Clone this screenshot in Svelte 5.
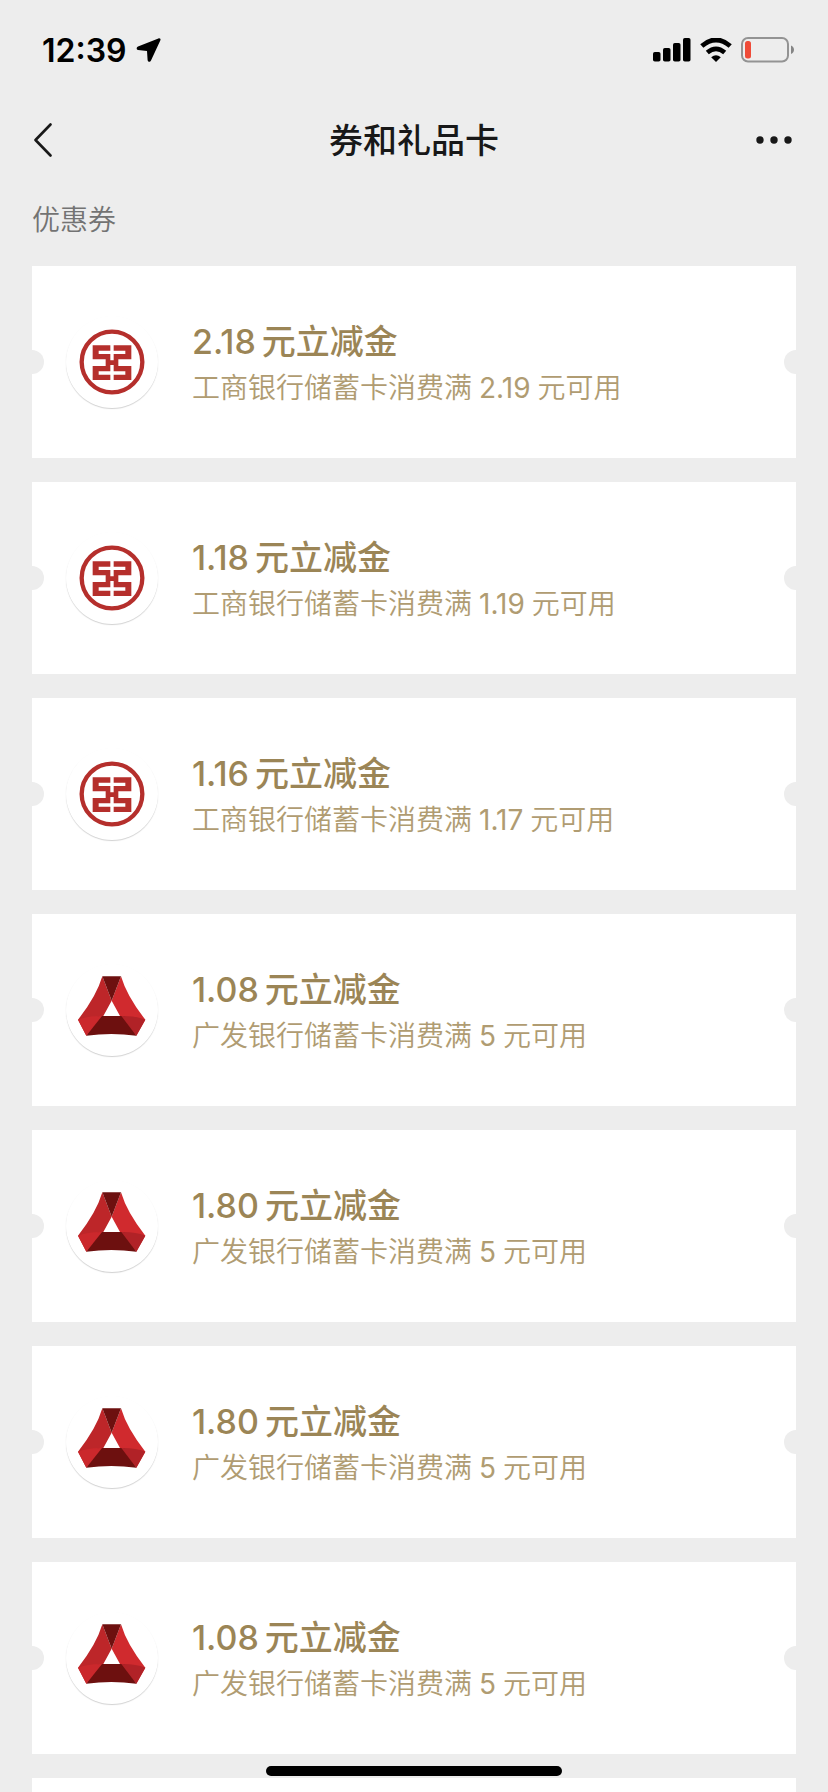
<script>
  const coupons = [
    { bank: 'icbc', name: '工商银行', amount: '2.18', min: '2.19' },
    { bank: 'icbc', name: '工商银行', amount: '1.18', min: '1.19' },
    { bank: 'icbc', name: '工商银行', amount: '1.16', min: '1.17' },
    { bank: 'cgb', name: '广发银行', amount: '1.08', min: '5' },
    { bank: 'cgb', name: '广发银行', amount: '1.80', min: '5' },
    { bank: 'cgb', name: '广发银行', amount: '1.80', min: '5' },
    { bank: 'cgb', name: '广发银行', amount: '1.08', min: '5' }
  ];
</script>

<div class="screen">
  <div class="status">
    <div class="clock">
      <span>12:39</span>
      <svg width="26" height="26" viewBox="0 0 26 26" aria-hidden="true">
        <path d="M22.400 1.400 2 9.600C.2 10.400.2 12.900 2 13.100L11 13.900 11.600 23C11.800 25.200 14.200 25.300 15 23.500L24.400 3.300C25 1.900 23.800.8 22.400 1.400Z" />
      </svg>
    </div>
    <div class="indicators">
      <svg width="38" height="24" viewBox="0 0 38 24" aria-hidden="true">
        <rect x="0" y="14" width="7.500" height="9.500" rx="1.800" />
        <rect x="10" y="10" width="7.500" height="13.500" rx="1.800" />
        <rect x="20" y="5" width="7.500" height="18.500" rx="1.800" />
        <rect x="30" y="0" width="7.500" height="23.500" rx="1.800" />
      </svg>
      <svg width="32" height="24" viewBox="0 0 32 24" aria-hidden="true">
        <path d="M1.800 8Q16-4.200 30.200 8" fill="none" stroke="#000" stroke-width="4.800" />
        <path d="M7.300 14.600Q16 7 24.700 14.600" fill="none" stroke="#000" stroke-width="4.600" />
        <path d="M11.200 19.300Q16 15.400 20.800 19.300L16 24Z" />
      </svg>
      <svg width="54" height="26" viewBox="0 0 54 26" aria-hidden="true">
        <rect x="1" y="1" width="46" height="23.500" rx="6" fill="none" stroke="#939393" stroke-width="2" />
        <rect x="4" y="4" width="6" height="17.500" rx="2.500" fill="#ef4b38" />
        <path d="M50 8.500c4 1.200 4 7.300 0 8.500Z" fill="#858585" />
      </svg>
    </div>
  </div>

  <header>
    <button aria-label="返回">
      <svg width="20" height="36" viewBox="0 0 20 36" aria-hidden="true">
        <path d="M18.500 2.500 3.500 18l15 15.500" fill="none" stroke="#181818" stroke-width="2.600" stroke-linecap="round" stroke-linejoin="round" />
      </svg>
    </button>
    <h1>券和礼品卡</h1>
    <button class="more" aria-label="更多">
      <svg width="36" height="8" viewBox="0 0 36 8" fill="#181818" aria-hidden="true">
        <circle cx="4" cy="4" r="3.700" /><circle cx="18" cy="4" r="3.700" /><circle cx="32" cy="4" r="3.700" />
      </svg>
    </button>
  </header>

  <main>
    <h2>优惠券</h2>
    <ul>
      {#each coupons as c}
        <li>
          <div class="logo">
            {#if c.bank === 'icbc'}
              <svg viewBox="0 0 276 276" aria-hidden="true">
                <circle cx="138" cy="138" r="91" fill="none" stroke="#b52f2c" stroke-width="13" />
                <path fill="#b52f2c" d="M80 88h53v16H98v10h35v19h10v-19h35v-10h-35V88h53v42h-39v20h39v42h-53v-16h35v-10h-35v-19h-10v19H98v10h35v16H80v-42h39v-20H80Z" />
              </svg>
            {:else}
              <svg viewBox="0 0 276 276" aria-hidden="true">
                <path fill="#bd2629" d="M109 37Q91 98 36 167L61 215 112 156 137 110Z" />
                <path fill="#d02a2e" d="M165 37Q183 98 238 167L211 215 162 156 137 110Z" />
                <path fill="#6d100f" d="M109 37h56l-28 73Z" />
                <path fill="#6d100f" d="M96 156h80l35 59q-75-10-150 0Z" />
                <path fill="#cb282c" d="M36 167q32-12 72-11L61 215Z" />
                <path fill="#b12227" d="M166 156q42-1 72 11l-27 48Z" />
              </svg>
            {/if}
          </div>
          <div class="info">
            <h3><span>{c.amount}</span>元立减金</h3>
            <p>{c.name}储蓄卡消费满<span>{c.min}</span>元可用</p>
          </div>
        </li>
      {/each}
      <li></li>
    </ul>
  </main>
  <div class="home"></div>
</div>

<style>
  :global(body) {
    background: #ededed;
  }
  .screen {
    height: 100vh;
    display: flex;
    flex-direction: column;
    overflow: hidden;
    background: #ededed;
    color: #181818;
    font-family: Inter, "Noto Sans CJK SC", sans-serif;
  }
  h1, h2, h3, p, ul {
    margin: 0;
    padding: 0;
  }
  .status {
    flex: none;
    height: 96px;
    display: flex;
    align-items: center;
    justify-content: space-between;
    padding: 4px 33px 0 42px;
    box-sizing: border-box;
    color: #000;
  }
  .clock, .indicators {
    display: flex;
    align-items: center;
    gap: 9px;
  }
  .clock {
    font-size: 32px;
    font-weight: 600;
  }
  header {
    flex: none;
    height: 88px;
    display: grid;
    grid-template-columns: 80px 1fr 80px;
    align-items: center;
    padding: 0 32px;
  }
  button {
    display: flex;
    border: 0;
    padding: 12px 0;
    background: none;
  }
  .more {
    justify-content: flex-end;
    padding-right: 4px;
  }
  h1 {
    padding-top: 2px;
    text-align: center;
    font-size: 34px;
    font-weight: 500;
    line-height: 48px;
  }
  main {
    flex: 1;
    min-height: 0;
    overflow-y: auto;
    scrollbar-width: none;
    padding: 0 32px;
  }
  h2 {
    padding: 16px 0 26px;
    font-size: 28px;
    font-weight: 350;
    line-height: 40px;
    color: #737373;
  }
  ul {
    display: flex;
    flex-direction: column;
    gap: 24px;
    list-style: none;
  }
  li {
    position: relative;
    display: flex;
    align-items: center;
    gap: 34px;
    min-height: 192px;
    padding: 0 34px;
    box-sizing: border-box;
    background: #fff;
  }
  li::before, li::after {
    content: "";
    position: absolute;
    top: 50%;
    width: 12px;
    height: 24px;
    margin-top: -12px;
    background: #ededed;
  }
  li::before {
    left: 0;
    border-radius: 0 12px 12px 0;
  }
  li::after {
    right: 0;
    border-radius: 12px 0 0 12px;
  }
  .logo {
    flex: none;
    width: 92px;
    height: 92px;
    border-radius: 50%;
    box-shadow: 0 1px 1px rgba(0, 0, 0, 0.18);
  }
  .logo svg {
    display: block;
    width: 100%;
  }
  .info {
    padding-top: 4px;
  }
  h3 {
    font-size: 34px;
    font-weight: 500;
    line-height: 48px;
    color: #9b8556;
  }
  h3 span {
    padding-right: 6px;
  }
  p {
    font-size: 28px;
    font-weight: 350;
    line-height: 44px;
    color: #b09c72;
  }
  p span {
    padding: 0 7px;
    font-weight: 400;
  }
  .home {
    position: fixed;
    left: 50%;
    bottom: 16px;
    width: 296px;
    height: 10px;
    border-radius: 5px;
    transform: translateX(-50%);
    background: #000;
  }
</style>
